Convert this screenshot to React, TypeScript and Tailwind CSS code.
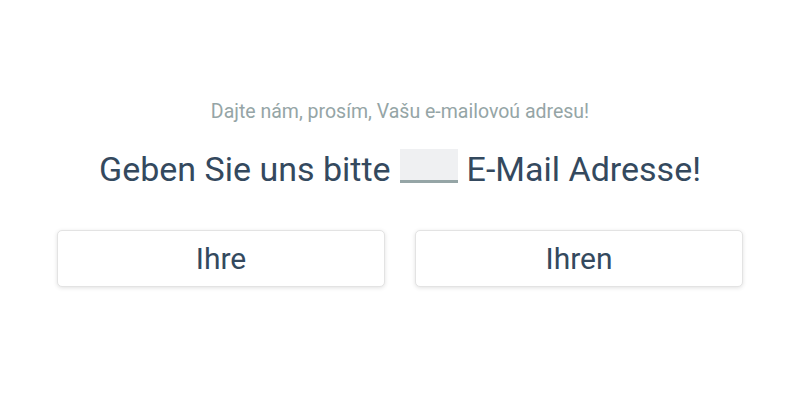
import React from "react";

const App: React.FC = () => {
  const options = ["Ihre", "Ihren"];

  return (
    <div className="w-[800px] h-[400px] bg-white font-['Roboto',sans-serif] flex flex-col items-center pt-[100px]">
      <p className="text-[19.5px] leading-[24px] text-[#95a5a6]">
        Dajte nám, prosím, Vašu e-mailovoú adresu!
      </p>
      <h1 className="mt-[25px] h-[40px] text-[34px] leading-[40px] text-[#34495e] flex items-start">
        <span>Geben Sie uns bitte</span>
        <span className="mx-[9px] inline-block w-[58px] h-[34px] bg-[#eff0f2] border-b-[3px] border-[#95a5a6]" />
        <span>E-Mail Adresse!</span>
      </h1>
      <div className="mt-[41px] w-full px-[57px] grid grid-cols-2 gap-[30px]">
        {options.map((opt) => (
          <button
            key={opt}
            type="button"
            className="h-[57px] rounded-[5px] border border-[#e3e3e3] bg-white shadow-[0_1px_4px_rgba(0,0,0,0.12)] text-[30px] text-[#34495e]"
          >
            {opt}
          </button>
        ))}
      </div>
    </div>
  );
};

export default App;
